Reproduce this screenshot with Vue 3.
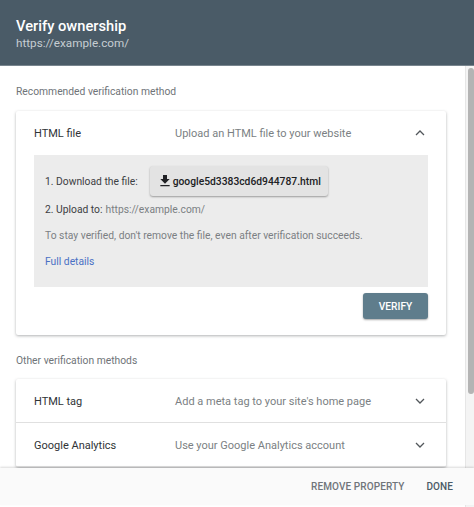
<template>
  <div class="dialog">
    <header class="head">
      <h1>Verify ownership</h1>
      <p>https://example.com/</p>
    </header>

    <div class="scroller">
      <main class="content">
        <h2>Recommended verification method</h2>
        <section class="card open">
          <div class="row">
            <span class="name">HTML file</span>
            <span class="desc">Upload an HTML file to your website</span>
            <svg class="chev" viewBox="0 0 24 24"><path d="M6 15l6-6 6 6" /></svg>
          </div>
          <div class="panel">
            <div class="step first">
              <span class="label">1. Download the file:</span>
              <button class="file" type="button">
                <svg viewBox="0 0 24 24"><path d="M19 9h-4V3H9v6H5l7 7 7-7zM5 18v2h14v-2H5z" /></svg>
                google5d3383cd6d944787.html
              </button>
            </div>
            <div class="step"><span class="label">2. Upload to:</span> https://example.com/</div>
            <p class="note">To stay verified, don't remove the file, even after verification succeeds.</p>
            <a class="link" href="#">Full details</a>
          </div>
          <div class="actions">
            <button class="verify" type="button">VERIFY</button>
          </div>
        </section>

        <h2 class="other">Other verification methods</h2>
        <section class="card">
          <div v-for="method in methods" :key="method.name" class="row line">
            <span class="name">{{ method.name }}</span>
            <span class="desc">{{ method.desc }}</span>
            <svg class="chev" viewBox="0 0 24 24"><path d="M6 9l6 6 6-6" /></svg>
          </div>
        </section>
      </main>
      <div class="track"><div class="thumb"></div></div>
    </div>

    <footer class="foot">
      <button type="button" class="muted">REMOVE PROPERTY</button>
      <button type="button">DONE</button>
    </footer>
  </div>
</template>

<script setup>
const methods = [
  { name: 'HTML tag', desc: "Add a meta tag to your site's home page" },
  { name: 'Google Analytics', desc: 'Use your Google Analytics account' }
];
</script>

<style>
html,
body {
  margin: 0;
  background: #fff;
}
</style>

<style scoped>
.dialog {
  width: 474px;
  height: 507px;
  position: relative;
  overflow: hidden;
  background: #fff;
  font-family: Roboto, "Liberation Sans", sans-serif;
  color: #3c4043;
}

.head {
  height: 66px;
  box-sizing: border-box;
  padding: 16px 16px 0;
  background: #4a5b67;
  border-bottom: 1px solid #78858e;
  color: #fff;
}

.head h1 {
  margin: 0;
  font-size: 14.7px;
  line-height: 20px;
  font-weight: 500;
}

.head p {
  margin: 0;
  font-size: 11.7px;
  line-height: 15px;
  color: #c6cdd2;
}

.scroller {
  display: flex;
  height: 441px;
  overflow: hidden;
}

.content {
  width: 430px;
  margin-left: 16px;
  flex: none;
}

h2 {
  margin: 0;
  padding-top: 19px;
  font-size: 10.3px;
  line-height: 14px;
  font-weight: 400;
  color: #6f7478;
  height: 26px;
}

h2.other {
  height: 25px;
}

.card {
  background: #fff;
  box-shadow: 0 1px 3px rgba(60, 64, 67, 0.4);
  border-radius: 2px;
}

.row {
  height: 44px;
  display: flex;
  align-items: center;
  padding-left: 18px;
  font-size: 11px;
}

.line {
  border-bottom: 1px solid #e0e0e0;
  height: 42px;
  padding-top: 1px;
}

.name {
  width: 141px;
  flex: none;
  color: #303336;
}

.desc {
  flex: 1;
  color: #7b7f83;
}

.chev {
  width: 16px;
  height: 16px;
  margin-right: 18px;
  fill: none;
  stroke: #52575b;
  stroke-width: 1.9;
}

.panel {
  margin: 0 18px;
  height: 132px;
  box-sizing: border-box;
  padding: 11px 11px 0;
  background: #ececec;
  font-size: 10.3px;
  color: #7b7f83;
}

.step {
  display: flex;
  align-items: center;
  gap: 3px;
  height: 22px;
}

.step.first {
  height: 30px;
  gap: 12px;
}

.step .label {
  color: #3c4043;
}

.step:not(.first) {
  margin-top: 2px;
}

.file {
  display: flex;
  align-items: center;
  gap: 0;
  height: 30px;
  width: 178px;
  padding: 0 0 0 7px;
  border: 0;
  border-radius: 3px;
  background: #e3e3e3;
  box-shadow: 0 1px 2px rgba(0, 0, 0, 0.35);
  font: 500 10.3px Roboto, "Liberation Sans", sans-serif;
  color: #202124;
  white-space: nowrap;
}

.file svg {
  width: 16px;
  height: 16px;
  flex: none;
  fill: #202124;
}

.note {
  margin: 9px 0 0;
  line-height: 14px;
}

.link {
  display: block;
  margin-top: 12px;
  line-height: 14px;
  color: #4a70c4;
  text-decoration: none;
}

.actions {
  display: flex;
  justify-content: flex-end;
  padding: 6px 18px 0;
  height: 42px;
}

.verify {
  width: 65px;
  height: 26px;
  border: 0;
  border-radius: 3px;
  background: #5f7d8c;
  box-shadow: 0 1px 2px rgba(0, 0, 0, 0.35);
  color: #fff;
  font: 500 10.2px Roboto, "Liberation Sans", sans-serif;
}

.track {
  width: 9px;
  margin-left: 19px;
  padding-left: 2px;
  background: #f4f4f4;
  border-left: 1px solid #e6e6e6;
  flex: none;
}

.thumb {
  width: 6px;
  height: 326px;
  margin-top: 2px;
  border-radius: 3px;
  background: #b4b4b4;
}

.foot {
  position: absolute;
  left: 0;
  right: 0;
  top: 468px;
  height: 37px;
  display: flex;
  align-items: center;
  justify-content: flex-end;
  gap: 22px;
  padding-right: 21px;
  background: #fafafa;
  box-shadow: 0 -1px 2px rgba(0, 0, 0, 0.15);
}

.foot button {
  padding: 0;
  border: 0;
  background: none;
  font: 500 10px Roboto, "Liberation Sans", sans-serif;
  letter-spacing: 0.1px;
  color: #4a5b67;
}

.foot .muted {
  color: #70757a;
}
</style>
